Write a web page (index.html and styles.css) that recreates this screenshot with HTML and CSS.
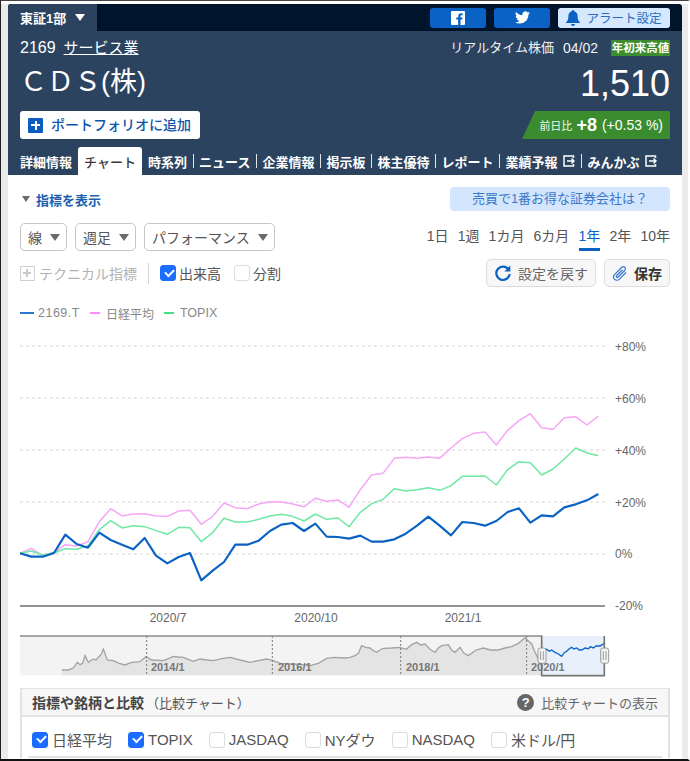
FILE: index.html
```html
<!DOCTYPE html>
<html lang="ja">
<head>
<meta charset="utf-8">
<title>CDS(株) チャート</title>
<link rel="stylesheet" href="styles.css">
</head>
<body>
<div class="page">
<main class="main">
  <header class="header">
    <div class="topbar">
      <div class="market">東証1部<span class="tri tri-white"></span></div>
      <div class="social">
        <a class="sns"><svg width="16" height="16" viewBox="0 0 16 16"><rect x="1" y="1" width="14" height="14" rx="1" fill="#fff"/><path d="M10.5 15V9.6h1.8l.3-2.1h-2.1V6.2c0-.6.2-1 1-1h1.1V3.3c-.2 0-.9-.1-1.6-.1-1.6 0-2.7 1-2.7 2.8v1.5H6.3v2.1h1.8V15z" fill="#0a62c4"/></svg></a>
        <a class="sns"><svg width="17" height="15" viewBox="0 0 24 24"><path fill="#fff" d="M23.953 4.57a10 10 0 01-2.825.775 4.958 4.958 0 002.163-2.723c-.951.555-2.005.959-3.127 1.184a4.92 4.92 0 00-8.384 4.482C7.69 8.095 4.067 6.13 1.64 3.162a4.822 4.822 0 00-.666 2.475c0 1.71.87 3.213 2.188 4.096a4.904 4.904 0 01-2.228-.616v.06a4.923 4.923 0 003.946 4.827 4.996 4.996 0 01-2.212.085 4.936 4.936 0 004.604 3.417 9.867 9.867 0 01-6.102 2.105c-.39 0-.779-.023-1.17-.067a13.995 13.995 0 007.557 2.209c9.053 0 13.998-7.496 13.998-13.985 0-.21 0-.42-.015-.63A9.935 9.935 0 0024 4.59z"/></svg></a>
        <a class="alert"><svg width="14" height="16" viewBox="0 0 14 16"><path fill="#0a62c4" d="M7 0a1.2 1.2 0 011.2 1.3C10.5 1.9 11.6 3.8 11.6 6c0 3.4.7 5 2.4 6.4V13H0v-.6C1.700 11 2.400 9.400 2.400 6c0-2.200 1.100-4.100 3.400-4.700A1.200 1.200 0 017 0zM5 14h4a2 2 0 01-4 0z"/></svg>アラート設定</a>
      </div>
    </div>
    <div class="info">
      <div class="row-code">
        <div class="code"><span class="code-num">2169</span><a class="sector">サービス業</a></div>
        <div class="realtime"><span class="rt-label">リアルタイム株価</span><span class="rt-date">04/02</span><span class="badge">年初来高値</span></div>
      </div>
      <div class="row-name">
        <h1 class="name">ＣＤＳ(株)</h1>
        <div class="price">1,510</div>
      </div>
      <div class="row-action">
        <a class="add"><span class="plus"></span><span class="add-text">ポートフォリオに追加</span></a>
        <div class="change"><span class="ch-label">前日比</span><b class="ch-val">+8</b><span class="ch-pct">(+0.53 %)</span></div>
      </div>
      <nav class="nav">
        <a class="nav-item">詳細情報</a>
        <a class="nav-item nav-active">チャート</a>
        <a class="nav-item">時系列</a><i class="sep"></i>
        <a class="nav-item">ニュース</a><i class="sep"></i>
        <a class="nav-item">企業情報</a><i class="sep"></i>
        <a class="nav-item">掲示板</a><i class="sep"></i>
        <a class="nav-item">株主優待</a><i class="sep"></i>
        <a class="nav-item">レポート</a><i class="sep"></i>
        <a class="nav-item">業績予報<svg class="ext" width="12" height="12" viewBox="0 0 12 12"><path d="M8 1H1v10h7M8 1h2.500v2M8 11h2.500V9M4 6h7.500M8.500 3.500L11 6 8.500 8.500" fill="none" stroke="#fff" stroke-width="1.500"/></svg></a><i class="sep"></i>
        <a class="nav-item">みんかぶ<svg class="ext" width="12" height="12" viewBox="0 0 12 12"><path d="M8 1H1v10h7M8 1h2.500v2M8 11h2.500V9M4 6h7.500M8.500 3.500L11 6 8.500 8.500" fill="none" stroke="#fff" stroke-width="1.500"/></svg></a>
      </nav>
    </div>
  </header>

  <section class="content">
    <div class="row-top">
      <a class="toggle"><span class="tri tri-gray"></span>指標を表示</a>
      <a class="banner">売買で1番お得な証券会社は？</a>
    </div>
    <div class="row-select">
      <div class="selects">
        <div class="select">線<span class="tri tri-gray"></span></div>
        <div class="select">週足<span class="tri tri-gray"></span></div>
        <div class="select">パフォーマンス<span class="tri tri-gray"></span></div>
      </div>
      <div class="ranges">
        <a class="range">1日</a><a class="range">1週</a><a class="range">1カ月</a><a class="range">6カ月</a><a class="range range-on">1年</a><a class="range">2年</a><a class="range">10年</a>
      </div>
    </div>
    <div class="row-tools">
      <div class="tools-left">
        <span class="tech"><span class="tech-box"></span>テクニカル指標</span>
        <i class="tool-sep"></i>
        <label class="check"><span class="cb on"></span>出来高</label>
        <label class="check"><span class="cb"></span>分割</label>
      </div>
      <div class="tools-right">
        <a class="btn"><svg width="18" height="18" viewBox="0 0 18 18"><path d="M14.600 5.500A6.700 6.700 0 1015.700 10" fill="none" stroke="#0a62c4" stroke-width="2.200"/><path d="M16.300 1.500v6h-6z" fill="#0a62c4"/></svg><span class="btn-gray">設定を戻す</span></a>
        <a class="btn"><svg width="16" height="17" viewBox="0 0 16 17"><path d="M14 7.500l-6.500 6.600c-1.500 1.500-3.700 1.500-5 .2s-1.200-3.400.3-4.900L9.500 2.500c1-1 2.400-1 3.300-.2s.8 2.200-.2 3.200L6.200 12c-.5.500-1.200.500-1.600.100s-.4-1.100.1-1.600L10.500 4.800" fill="none" stroke="#3a78d0" stroke-width="1.200"/></svg><b class="btn-dark">保存</b></a>
      </div>
    </div>
    <div class="legend">
      <span class="lg lg-code"><i class="lg-line lg-blue"></i>2169.T</span>
      <span class="lg lg-jp"><i class="lg-line lg-pink"></i>日経平均</span>
      <span class="lg"><i class="lg-line lg-green"></i>TOPIX</span>
    </div>
  </section>

  <svg class="chart" width="674" height="350" viewBox="8 330 674 350">
    <g class="grid">
      <line x1="20" x2="605" y1="347" y2="347"/>
      <line x1="20" x2="605" y1="399" y2="399"/>
      <line x1="20" x2="605" y1="451" y2="451"/>
      <line x1="20" x2="605" y1="503" y2="503"/>
      <line x1="20" x2="605" y1="555" y2="555"/>
    </g>
    <line class="axis" x1="20" x2="605" y1="607" y2="607"/>
    <g class="ylab">
      <text x="615" y="352">+80%</text>
      <text x="615" y="404">+60%</text>
      <text x="615" y="456">+40%</text>
      <text x="615" y="508">+20%</text>
      <text x="615" y="559">0%</text>
      <text x="615" y="611">-20%</text>
    </g>
    <g class="xlab">
      <text x="168" y="623">2020/7</text>
      <text x="316" y="623">2020/10</text>
      <text x="463" y="623">2021/1</text>
    </g>
    <g transform="scale(.33333) translate(0 1200)" fill="none" stroke-linejoin="round">
      <polyline stroke="#f5a6f7" stroke-width="4.500" points="60,463 94,448 128,470 162,460 196,437 230,441 264,428 298,368 332,329 366,351 400,345 434,344 468,351 502,352 536,336 570,334 604,376 638,352 672,312 706,326 742,329 776,315 810,308 844,309 878,315 912,323 946,298 980,307 1014,303 1047,325 1081,272 1115,228 1149,223 1183,178 1217,175 1251,178 1285,174 1319,178 1353,147 1387,119 1421,103 1455,99 1489,138 1523,94 1557,65 1591,44 1625,86 1659,91 1693,56 1727,53 1761,78 1795,51"/>
      <polyline stroke="#6fe8a4" stroke-width="4.500" points="60,463 94,456 128,468 162,462 196,449 230,451 264,440 298,392 332,365 366,387 400,380 434,383 468,395 502,406 536,385 570,386 604,428 638,401 672,358 706,369 742,369 776,361 810,351 844,346 878,352 912,366 946,345 980,361 1014,357 1047,383 1081,340 1115,314 1149,301 1183,269 1217,276 1251,272 1285,266 1319,274 1353,260 1387,232 1421,232 1455,231 1489,258 1523,212 1557,188 1591,191 1625,228 1659,210 1693,180 1727,147 1761,162 1795,170"/>
      <polyline stroke="#0a62c4" stroke-width="6.500" points="60,463 94,473 128,473 162,462 196,407 230,435 264,446 298,401 332,423 366,437 400,451 434,417 468,470 502,493 536,474 570,462 604,544 638,515 672,489 706,437 742,437 776,425 810,396 844,377 878,372 912,396 946,374 980,413 1014,414 1047,419 1081,410 1115,428 1149,428 1183,421 1217,404 1251,380 1285,353 1319,380 1353,409 1387,369 1421,372 1455,380 1489,366 1523,339 1557,328 1591,371 1625,349 1659,352 1693,325 1727,316 1761,304 1795,285"/>
    </g>
    <g transform="scale(.33333) translate(0 1875)">
      <rect x="60" y="36" width="1565" height="118" fill="#f3f3f3"/>
      <polygon fill="#e4e4e4" points="186,154 186,138 205,138 218,133 225,125 232,115 240,122 248,118 255,95 265,115 280,105 288,108 295,100 303,92 310,75 322,108 340,110 358,118 375,123 395,115 420,113 438,98 455,108 490,110 505,104 520,97 535,99 550,100 565,106 580,112 600,105 620,108 640,110 665,104 690,100 720,108 750,115 775,110 800,105 820,110 840,118 880,120 905,122 930,125 955,118 980,103 1005,100 1035,102 1050,100 1065,95 1075,88 1085,65 1097,70 1110,72 1120,80 1130,85 1140,78 1150,73 1175,72 1200,70 1210,74 1220,75 1235,62 1250,55 1262,63 1275,60 1290,76 1305,85 1315,72 1325,65 1345,62 1355,78 1365,85 1380,70 1392,88 1405,95 1428,78 1450,72 1472,78 1495,78 1515,72 1535,68 1555,58 1575,42 1595,60 1605,85 1615,105 1625,120 1625,154"/>
      <polyline fill="none" stroke="#a3a3a3" stroke-width="4" points="186,138 205,138 218,133 225,125 232,115 240,122 248,118 255,95 265,115 280,105 288,108 295,100 303,92 310,75 322,108 340,110 358,118 375,123 395,115 420,113 438,98 455,108 490,110 505,104 520,97 535,99 550,100 565,106 580,112 600,105 620,108 640,110 665,104 690,100 720,108 750,115 775,110 800,105 820,110 840,118 880,120 905,122 930,125 955,118 980,103 1005,100 1035,102 1050,100 1065,95 1075,88 1085,65 1097,70 1110,72 1120,80 1130,85 1140,78 1150,73 1175,72 1200,70 1210,74 1220,75 1235,62 1250,55 1262,63 1275,60 1290,76 1305,85 1315,72 1325,65 1345,62 1355,78 1365,85 1380,70 1392,88 1405,95 1428,78 1450,72 1472,78 1495,78 1515,72 1535,68 1555,58 1575,42 1595,60 1605,85 1615,105 1625,120"/>
      <rect x="1625" y="36" width="188" height="119" fill="#e8f1fb"/>
      <g class="navdash"><line x1="440" x2="440" y1="36" y2="154"/><line x1="817" x2="817" y1="36" y2="154"/><line x1="1202" x2="1202" y1="36" y2="154"/><line x1="1580" x2="1580" y1="36" y2="154"/></g>
      <polyline fill="none" stroke="#0a62c4" stroke-width="4" points="1625,73 1632,78 1640,76 1648,82 1655,78 1665,85 1675,90 1685,97 1693,86 1700,82 1708,74 1715,70 1722,75 1730,72 1738,78 1745,78 1755,72 1765,74 1772,68 1780,72 1788,66 1800,66 1813,58"/>
      <path d="M60 36H1625V155H1813V36" fill="none" stroke="#8c8c8c" stroke-width="5"/>
      <path d="M1625 155H1813V36M1625 36V155" fill="none" stroke="#707070" stroke-width="3"/>
      <g class="navhandle"><rect x="1614" y="72" width="24" height="46" rx="7"/><rect x="1802" y="72" width="24" height="46" rx="7"/></g>
      <g class="navgrip"><path d="M1622 82v26M1630 82v26M1810 82v26M1818 82v26"/></g>
    </g>
    <g class="navlab">
      <text x="151" y="672">2014/1</text>
      <text x="278" y="672">2016/1</text>
      <text x="406" y="672">2018/1</text>
      <text x="531" y="672">2020/1</text>
    </g>
  </svg>

  <section class="panel">
    <div class="panel-head">
      <div class="panel-title"><b>指標や銘柄と比較</b><span class="panel-sub">（比較チャート）</span></div>
      <a class="panel-help"><span class="help">?</span>比較チャートの表示</a>
    </div>
    <div class="panel-body">
      <label class="check2"><span class="cb on"></span>日経平均</label>
      <label class="check2"><span class="cb on"></span>TOPIX</label>
      <label class="check2"><span class="cb"></span>JASDAQ</label>
      <label class="check2"><span class="cb"></span>NYダウ</label>
      <label class="check2"><span class="cb"></span>NASDAQ</label>
      <label class="check2"><span class="cb"></span>米ドル/円</label>
    </div>
    <div class="panel-line"></div>
  </section>
</main>
</div>
</body>
</html>
```
FILE: styles.css
```css
* { box-sizing: border-box; }
html, body { margin: 0; padding: 0; }
body {
  font-family: "Liberation Sans", "Noto Sans CJK JP", sans-serif;
  color: #555;
  background: #fff;
}
a { color: inherit; text-decoration: none; }
.page {
  width: 690px;
  height: 761px;
  overflow: hidden;
  padding: 3px 6px 0 7px;
  background: linear-gradient(#fff 3px, #ebebeb 3px);
  border-top: 1px solid #444;
  border-left: 1px solid #222;
  border-right: 2px solid #fff;
  border-bottom: 2px solid #111;
}
.main { background: #fff; height: 100%; overflow: hidden; }

.tri { display: inline-block; width: 0; height: 0; border-style: solid; border-width: 7px 5px 0; border-color: #666 transparent transparent; }
.tri-white { border-top-color: #fff; margin-left: 9px; }
.tri-gray { border-top-color: #6a6a6a; }

.topbar { display: flex; align-items: center; height: 27px; background: #00142b; border-radius: 3px 3px 0 0; overflow: hidden; }
.market { display: flex; align-items: center; width: 89px; height: 27px; padding-left: 12px; background: #2b435f; color: #fff; font-size: 13px; font-weight: 700; white-space: nowrap; }
.social { display: flex; align-items: center; gap: 8px; margin-left: auto; padding-right: 12px; }
.sns { display: flex; align-items: center; justify-content: center; width: 56px; height: 20px; background: #0a62c4; border-radius: 3px; }
.alert { display: flex; align-items: center; gap: 6px; justify-content: center; width: 112px; height: 20px; background: #d6e8fd; border-radius: 3px; color: #2a6cc0; font-size: 12.500px; }

.info { background: #2b435f; padding: 0 12px; height: 144px; color: #fff; }
.row-code { display: flex; align-items: center; justify-content: space-between; height: 34px; padding-bottom: 1px; }
.code { display: flex; align-items: baseline; gap: 8px; margin-top: 1px; font-size: 15px; line-height: 20px; }
.code-num { font-size: 16px; }
.sector { text-decoration: underline; }
.realtime { display: flex; align-items: center; font-size: 13px; line-height: 20px; color: #eef2f6; }
.rt-date { font-size: 14px; margin-left: 9px; }
.badge { margin-left: 13px; width: 59px; height: 16px; line-height: 16px; text-align: center; background: #3b8c2e; color: #fff; font-size: 11.500px; font-weight: 700; white-space: nowrap; }
.row-name { display: flex; align-items: center; justify-content: space-between; height: 40px; }
.name { margin: 0 0 7px; font-size: 27px; line-height: 34px; font-weight: 400; }
.price { font-size: 36px; line-height: 40px; margin-bottom: 3px; }
.row-action { display: flex; justify-content: space-between; margin-top: 6px; height: 28px; }
.add { display: flex; align-items: center; width: 180px; height: 28px; padding-left: 8px; gap: 8px; background: #fff; border-radius: 3px; color: #0f55aa; font-size: 14px; font-weight: 500; }
.add-text { margin-bottom: 2px; }
.plus { position: relative; width: 15px; height: 15px; background: #0a5cc0; border-radius: 1px; }
.plus::before { content: ""; position: absolute; left: 3px; top: 6.500px; width: 9px; height: 2px; background: #fff; }
.plus::after { content: ""; position: absolute; left: 6.500px; top: 3px; width: 2px; height: 9px; background: #fff; }
.change { display: flex; align-items: center; justify-content: flex-end; width: 148px; height: 28px; padding-right: 7px; background: #3b8c2e; clip-path: polygon(13px 0, 100% 0, 100% 100%, 0 100%); }
.ch-label { font-size: 11px; color: #f0f7ee; }
.ch-val { font-size: 18px; margin-left: 4px; }
.ch-pct { font-size: 14px; margin-left: 5px; }

.nav { display: flex; align-items: center; margin-top: 8px; height: 28px; font-size: 13px; font-weight: 700; white-space: nowrap; }
.nav-item { display: flex; align-items: center; gap: 6px; }
.nav-active { justify-content: center; width: 64px; height: 28px; margin: 0 6px; background: #fff; color: #3a3a3a; border-radius: 3px 3px 0 0; font-weight: 500; }
.sep { width: 1px; height: 14px; margin: 0 5.500px; background: #dfe5ea; }
.ext { flex: none; }

.content { padding: 0 12px; }
.row-top { display: flex; align-items: center; justify-content: space-between; margin-top: 12px; height: 24px; }
.toggle { display: flex; align-items: center; gap: 6px; color: #1a5fb0; font-size: 13px; font-weight: 700; padding-left: 2px; }
.toggle .tri { border-width: 6px 4px 0; }
.banner { width: 220px; height: 24px; line-height: 24px; text-align: center; background: #d3e6fd; border-radius: 4px; color: #3b78c8; font-size: 13px; }
.row-select { display: flex; align-items: center; justify-content: space-between; margin-top: 12px; height: 28px; }
.selects { display: flex; gap: 8px; }
.select { display: flex; align-items: center; justify-content: space-between; gap: 8px; height: 28px; padding: 0 6px 0 7px; border: 1.500px solid #c6c6c6; border-radius: 5px; font-size: 14px; color: #555; white-space: nowrap; }
.ranges { display: flex; gap: 9.170px; font-size: 14px; height: 28px; }
.range { height: 28px; line-height: 26px; white-space: nowrap; }
.range-on { color: #0a62c4; border-bottom: 3px solid #0a62c4; }
.row-tools { display: flex; align-items: center; justify-content: space-between; margin-top: 8px; height: 28px; }
.tools-left { display: flex; align-items: center; }
.tech { display: flex; align-items: center; gap: 4px; color: #b2b2b2; font-size: 14px; }
.tech-box { position: relative; width: 15px; height: 15px; border: 1.500px solid #d0d0d0; }
.tech-box::before { content: ""; position: absolute; left: 2px; top: 5px; width: 8px; height: 2px; background: #c8c8c8; }
.tech-box::after { content: ""; position: absolute; left: 5px; top: 2px; width: 2px; height: 8px; background: #c8c8c8; }
.tool-sep { width: 1px; height: 21px; margin: 0 11px; background: #d4d4d4; }
.check { display: flex; align-items: center; gap: 3px; margin-right: 13px; font-size: 14px; color: #555; }
.cb { position: relative; display: block; flex: none; width: 16px; height: 16px; border: 1.500px solid #dcdcdc; border-radius: 3px; background: #fff; }
.cb.on { background: #1a6dff; border-color: #1a6dff; }
.cb.on::after { content: ""; position: absolute; left: 3.500px; top: 2.500px; width: 7px; height: 4px; border-left: 2px solid #fff; border-bottom: 2px solid #fff; transform: rotate(-45deg); }
.tools-right { display: flex; gap: 8px; }
.btn { display: flex; align-items: center; justify-content: center; gap: 6px; height: 28px; padding: 0 6px; background: #f7f7f7; border: 1.500px solid #dcdcdc; border-radius: 5px; font-size: 14px; white-space: nowrap; }
.btn:first-child { width: 110px; }
.btn:last-child { width: 66px; }
.btn-gray { color: #666; }
.btn-dark { color: #333; }
.legend { display: flex; gap: 10px; margin-top: 19px; height: 14px; margin-bottom: 9px; font-size: 12.500px; color: #888; }
.lg { display: flex; align-items: center; gap: 4px; white-space: nowrap; }
.lg-code { letter-spacing: .5px; }
.lg-jp { font-size: 12px; }
.lg-line { display: block; width: 14px; height: 2px; }
.lg-pink, .lg-green { width: 10px; margin-right: 2px; }
.lg-blue { background: #2a78d2; }
.lg-pink { background: #ff8cff; }
.lg-green { background: #45e08a; }

.chart { display: block; }
.grid line { stroke: #e4e4e4; stroke-width: 1.500; stroke-dasharray: 3 3; }
.axis { stroke: #929292; stroke-width: 2; }
.ylab text { font-size: 12px; fill: #666; }
.xlab text { font-size: 12px; fill: #666; text-anchor: middle; }
.navlab text { font-size: 11px; fill: #777; font-weight: 700; }
.navdash line { stroke: #777; stroke-width: 3; stroke-dasharray: 6 6; }
.navhandle rect { fill: #f2f2f2; stroke: #999; stroke-width: 3; }
.navgrip path { stroke: #999; stroke-width: 3; fill: none; }

.panel { margin: 9px 12px 0; border: 2px solid #e2e2e2; border-bottom: 0; border-top-width: 1.500px; }
.panel-head { display: flex; align-items: center; justify-content: space-between; height: 28px; padding: 0 10px; background: #f7f7f7; border-bottom: 2px solid #e2e2e2; }
.panel-title { font-size: 14px; color: #444; white-space: nowrap; }
.panel-title b { color: #444; }
.panel-sub { margin-left: 2px; font-size: 13px; color: #555; }
.panel-help { display: flex; align-items: center; gap: 7px; font-size: 13px; color: #666; }
.help { width: 17px; height: 17px; line-height: 17px; border-radius: 50%; background: #666; color: #fff; text-align: center; font-size: 13px; font-weight: 700; }
.panel-body { display: flex; align-items: center; gap: 16px; height: 39px; padding: 6px 10px 0; }
.check2 { display: flex; align-items: center; gap: 4px; font-size: 15px; color: #555; white-space: nowrap; }
.panel-line { height: 2px; margin: 0 6px; background: #e2e2e2; }
```
